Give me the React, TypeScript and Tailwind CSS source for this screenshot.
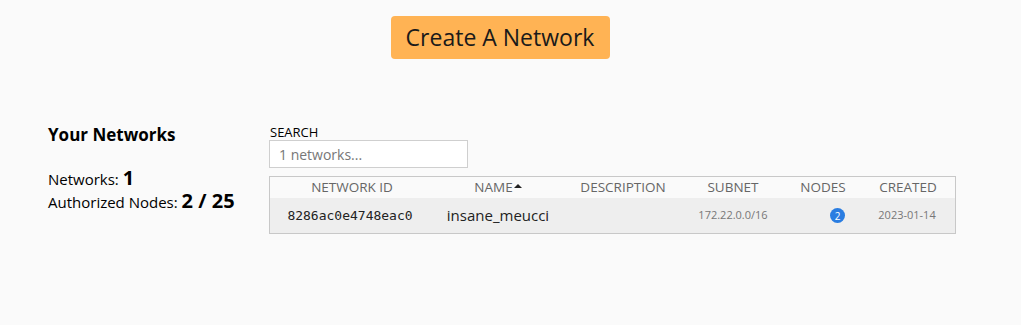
import React from "react";

export default function App() {
  const font = { fontFamily: '"Open Sans", "Noto Sans", sans-serif' };
  return (
    <div className="w-[1021px] h-[325px] bg-[#fafafa] text-black" style={font}>
      <div className="flex justify-center pt-[16px] pr-[21px]">
        <button className="h-[43px] w-[219px] rounded-[4px] bg-[#ffb354] text-[23px] text-[#1a1a1a]">
          Create A Network
        </button>
      </div>
      <div className="flex pt-[62px]">
        <div className="w-[269px] pl-[48px] pt-[2px]">
          <div className="text-[17px] font-bold leading-[24px]">Your Networks</div>
          <div className="mt-[20px] text-[15px] leading-[21px]">
            Networks: <span className="text-[20px] font-bold">1</span>
          </div>
          <div className="text-[15px] leading-[21px]">
            Authorized Nodes: <span className="text-[20px] font-bold">2 / 25</span>
          </div>
        </div>
        <div className="pt-[4px]">
          <div className="text-[13px] leading-[15px] pl-[1px]">SEARCH</div>
          <div className="w-[199px] h-[28px] border border-[#cfcfcf] bg-white flex items-center pl-[9px] text-[14px] text-[#777]">
            1 networks...
          </div>
          <div className="mt-[8px] w-[687px] border border-[#c8c8c8]">
            <div className="grid grid-cols-[164px_128px_122px_98px_82px_92px] h-[21px] items-center text-[13.5px] text-[#666] bg-[#fafafa]">
              <div className="text-center">NETWORK ID</div>
              <div className="text-center flex items-center justify-center">
                NAME
                <svg width="8" height="6" viewBox="0 0 8 6" className="ml-[1px] mb-[4px]">
                  <path d="M0 5 L4 1 L8 5 Z" fill="#222" />
                </svg>
              </div>
              <div className="text-center">DESCRIPTION</div>
              <div className="text-center">SUBNET</div>
              <div className="text-center">NODES</div>
              <div className="text-center pr-[4px]">CREATED</div>
            </div>
            <div className="grid grid-cols-[164px_128px_122px_98px_82px_92px] h-[35px] items-center bg-[#eeeeee]">
              <div className="text-center text-[13px] text-[#222] pr-[4px]" style={{ fontFamily: '"DejaVu Sans Mono", monospace' }}>
                8286ac0e4748eac0
              </div>
              <div className="text-center text-[15px] text-[#222]">insane_meucci</div>
              <div />
              <div className="text-center text-[11px] text-[#777]">172.22.0.0/16</div>
              <div className="flex justify-end pr-[19px]">
                <span className="w-[15px] h-[15px] rounded-full bg-[#2a7de1] text-white text-[10px] flex items-center justify-center leading-none">
                  2
                </span>
              </div>
              <div className="text-center text-[11px] text-[#777] pr-[6px]">2023-01-14</div>
            </div>
          </div>
        </div>
      </div>
    </div>
  );
}
